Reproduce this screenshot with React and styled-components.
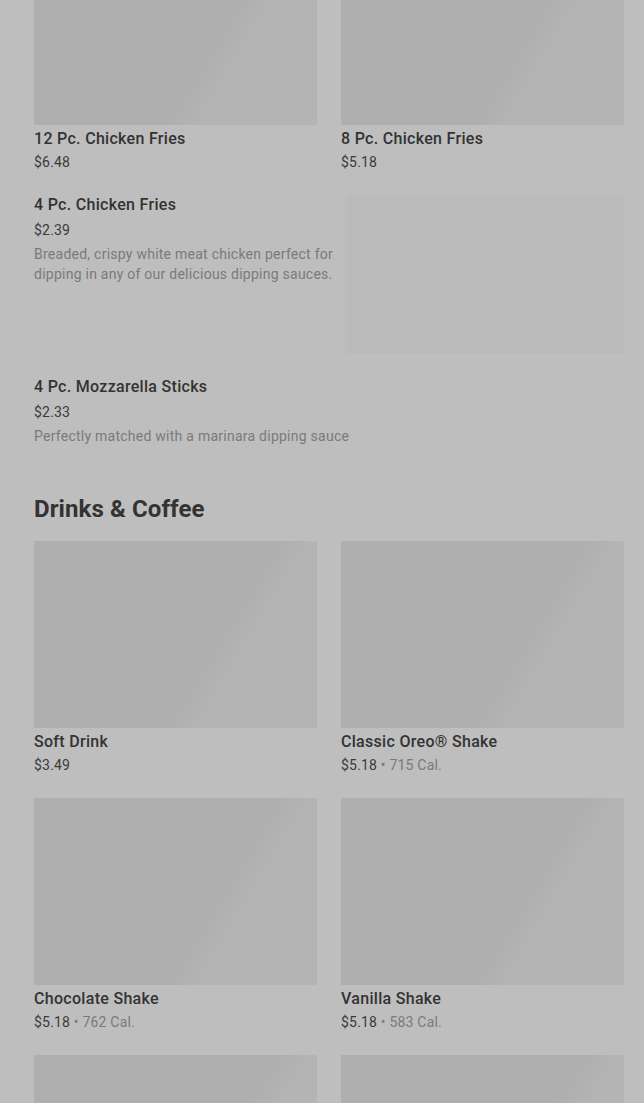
import React from "react";
import styled, { createGlobalStyle } from "styled-components";

const GlobalStyle = createGlobalStyle`
  html, body { margin: 0; padding: 0; background: #bebebe; }
  body { font-family: Roboto, "Liberation Sans", Arial, sans-serif; -webkit-font-smoothing: antialiased; }
  * { box-sizing: border-box; }
`;

const Page = styled.div`
  height: 1103px;
  overflow: hidden;
  padding: 0 20px 0 34px;
  background: #bebebe;
`;

const Inner = styled.div`
  margin-top: -62px;
  display: flex;
  flex-direction: column;
`;

const Grid = styled.div`
  display: grid;
  grid-template-columns: 1fr 1fr;
  column-gap: 24px;
  row-gap: 23px;
  margin-top: ${(p) => p.$mt || 0}px;
`;

const Card = styled.div`
  display: flex;
  flex-direction: column;
`;

const Thumb = styled.div`
  height: 187px;
  background: linear-gradient(121deg, #afafaf 0%, #afafaf 62%, #b4b4b4 70%, #b4b4b4 100%);
`;

const Title = styled.div`
  font-size: 16px;
  font-weight: 500;
  line-height: 20px;
  letter-spacing: 0.3px;
  color: #333333;
  padding-top: 4px;
`;

const Meta = styled.div`
  font-size: 14px;
  line-height: 20px;
  letter-spacing: 0.2px;
  color: #3a3a3a;
  margin-top: 3px;
`;

const Cal = styled.span`
  color: #7a7a7a;
`;

const List = styled.div`
  display: flex;
  flex-direction: column;
  gap: 23px;
  margin-top: 23px;
`;

const ListItem = styled.div`
  display: flex;
  gap: 14px;
  align-items: flex-start;
`;

const ListText = styled.div`
  flex: 1;
  display: flex;
  flex-direction: column;
`;

const ListTitle = styled.div`
  font-size: 16px;
  font-weight: 500;
  line-height: 20px;
  letter-spacing: 0.3px;
  color: #333333;
`;

const ListPrice = styled.div`
  font-size: 14px;
  line-height: 20px;
  letter-spacing: 0.2px;
  color: #3a3a3a;
  margin-top: 5px;
`;

const Desc = styled.div`
  font-size: 14px;
  line-height: 20px;
  letter-spacing: 0.25px;
  color: #7a7a7a;
  margin-top: 4px;
`;

const ListImage = styled.div`
  width: 276px;
  height: 159px;
  flex: none;
  background: #bababa;
  box-shadow: -3px 0 0 #bcbcbc;
`;

const Heading = styled.h2`
  margin: 47px 0 0;
  font-size: 24px;
  font-weight: 700;
  line-height: 32px;
  color: #333333;
  letter-spacing: 0.1px;
`;

const topItems = [
  { name: "12 Pc. Chicken Fries", price: "$6.48" },
  { name: "8 Pc. Chicken Fries", price: "$5.18" },
];

const listItems = [
  {
    name: "4 Pc. Chicken Fries",
    price: "$2.39",
    desc: "Breaded, crispy white meat chicken perfect for dipping in any of our delicious dipping sauces.",
    image: true,
  },
  {
    name: "4 Pc. Mozzarella Sticks",
    price: "$2.33",
    desc: "Perfectly matched with a marinara dipping sauce",
    image: false,
  },
];

const drinks = [
  { name: "Soft Drink", price: "$3.49" },
  { name: "Classic Oreo® Shake", price: "$5.18", cal: "715 Cal." },
  { name: "Chocolate Shake", price: "$5.18", cal: "762 Cal." },
  { name: "Vanilla Shake", price: "$5.18", cal: "583 Cal." },
  { name: "", price: "" },
  { name: "", price: "" },
];

function GridCard({ item }) {
  return (
    <Card>
      <Thumb />
      <Title>{item.name}</Title>
      <Meta>
        {item.price}
        {item.cal && <Cal> • {item.cal}</Cal>}
      </Meta>
    </Card>
  );
}

export default function App() {
  return (
    <>
      <GlobalStyle />
      <Page>
        <Inner>
          <Grid>
            {topItems.map((it) => (
              <GridCard key={it.name} item={it} />
            ))}
          </Grid>
          <List>
            {listItems.map((it) => (
              <ListItem key={it.name}>
                <ListText>
                  <ListTitle>{it.name}</ListTitle>
                  <ListPrice>{it.price}</ListPrice>
                  <Desc>{it.desc}</Desc>
                </ListText>
                {it.image && <ListImage />}
              </ListItem>
            ))}
          </List>
          <Heading>Drinks &amp; Coffee</Heading>
          <Grid $mt={16}>
            {drinks.map((it, i) => (
              <GridCard key={i} item={it} />
            ))}
          </Grid>
        </Inner>
      </Page>
    </>
  );
}
